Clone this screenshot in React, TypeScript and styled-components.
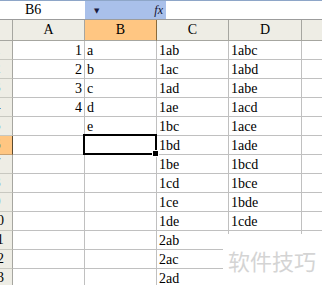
import styled, { createGlobalStyle } from 'styled-components';

const GlobalStyle = createGlobalStyle`
  html, body { margin: 0; padding: 0; background: #fff; }
  * { box-sizing: border-box; }
`;

const rows: string[][] = [
  ['1', 'a', '1ab', '1abc'],
  ['2', 'b', '1ac', '1abd'],
  ['3', 'c', '1ad', '1abe'],
  ['4', 'd', '1ae', '1acd'],
  ['', 'e', '1bc', '1ace'],
  ['', '', '1bd', '1ade'],
  ['', '', '1be', '1bcd'],
  ['', '', '1cd', '1bce'],
  ['', '', '1ce', '1bde'],
  ['', '', '1de', '1cde'],
  ['', '', '2ab', ''],
  ['', '', '2ac', ''],
  ['', '', '2ad', ''],
];

const columns = ['A', 'B', 'C', 'D', ''];
const SELECTED_ROW = 6;
const SELECTED_COL = 1;

const App = () => {
  return (
    <Screen>
      <GlobalStyle />
      <FormulaBar>
        <NameBox>B6</NameBox>
        <BlueStrip>
          <Arrow>▼</Arrow>
          <Fx>fx</Fx>
        </BlueStrip>
        <FormulaInput />
      </FormulaBar>

      <Sheet>
        <Corner />
        {columns.map((c, i) => (
          <ColHeader key={'h' + i} $active={i === SELECTED_COL}>{c}</ColHeader>
        ))}

        {rows.map((r, ri) => (
          <Row key={ri} r={r} n={ri + 1} />
        ))}
      </Sheet>

      <Watermark>软件技巧</Watermark>
    </Screen>
  );
};

const Row = ({ r, n }: { r: string[]; n: number }) => (
  <>
    <RowHeader $active={n === SELECTED_ROW}>
      <RowNum>{n}</RowNum>
    </RowHeader>
    {r.map((v, ci) => (
      <Cell key={ci} $right={ci === 0} $selected={n === SELECTED_ROW && ci === SELECTED_COL}>
        {v}
      </Cell>
    ))}
    <Cell />
  </>
);

// --- styles ---

const Screen = styled.div`
  position: relative;
  width: 322px;
  height: 285px;
  overflow: hidden;
  background: #fff;
  font-family: 'Liberation Serif', 'DejaVu Serif', serif;
  font-size: 14px;
  color: #000;
`;

const FormulaBar = styled.div`
  display: flex;
  height: 20px;
  border-top: 1px solid #8ea6c8;
  border-bottom: 1px solid #9c9c9c;
`;

const NameBox = styled.div`
  width: 85px;
  padding-left: 25px;
  display: flex;
  align-items: center;
  background: #fff;
`;

const BlueStrip = styled.div`
  width: 81px;
  display: flex;
  align-items: center;
  justify-content: space-between;
  padding: 0 3px 0 9px;
  background: #a9c0ea;
`;

const Arrow = styled.span`
  font-family: 'DejaVu Sans', sans-serif;
  font-size: 7px;
  color: #1a1a40;
  margin-top: 2px;
`;

const Fx = styled.span`
  font-style: italic;
  font-size: 12px;
  color: #101030;
`;

const FormulaInput = styled.div`
  flex: 1;
  background: #fff;
`;

const Sheet = styled.div`
  display: grid;
  grid-template-columns: 13px 72px 72px 72px 73px 40px;
  grid-template-rows: 21px;
  grid-auto-rows: 19px;
`;

const Corner = styled.div`
  background: #eeede5;
  border-right: 1px solid #a6a6a0;
  border-bottom: 1px solid #a6a6a0;
`;

const ColHeader = styled.div<{ $active?: boolean }>`
  display: flex;
  align-items: center;
  justify-content: center;
  background: ${(p) => (p.$active ? '#ffc682' : '#eeede5')};
  border-right: 1px solid ${(p) => (p.$active ? '#8a6a3a' : '#a6a6a0')};
  border-bottom: 1px solid #a6a6a0;
`;

const RowHeader = styled.div<{ $active?: boolean }>`
  overflow: hidden;
  background: ${(p) => (p.$active ? '#ffc682' : '#eeede5')};
  border-right: 1px solid ${(p) => (p.$active ? '#5a4a30' : '#a6a6a0')};
  border-bottom: 1px solid ${(p) => (p.$active ? '#c8a070' : '#c8c8c0')};
`;

const RowNum = styled.div`
  width: 28px;
  margin-left: -17px;
  height: 100%;
  display: flex;
  align-items: center;
  justify-content: center;
  white-space: nowrap;
`;

const Cell = styled.div<{ $right?: boolean; $selected?: boolean }>`
  position: relative;
  display: flex;
  align-items: center;
  justify-content: ${(p) => (p.$right ? 'flex-end' : 'flex-start')};
  padding: 1px 2px 0 2px;
  border-right: 1px solid #c0c0c0;
  border-bottom: 1px solid #c0c0c0;
  white-space: nowrap;

  ${(p) =>
    p.$selected &&
    `
    &::after {
      content: '';
      position: absolute;
      left: -2px;
      top: -2px;
      right: -1px;
      bottom: -1px;
      border: 2px solid #000;
    }
    &::before {
      content: '';
      position: absolute;
      right: -3px;
      bottom: -3px;
      width: 5px;
      height: 5px;
      background: #000;
      border: 1px solid #fff;
      z-index: 1;
    }
  `}
`;

const Watermark = styled.div`
  position: absolute;
  left: 223px;
  top: 234px;
  right: 0;
  bottom: 0;
  background: #fff;
  padding: 13px 0 0 5px;
  font-family: 'Noto Sans CJK SC', sans-serif;
  font-size: 22px;
  line-height: 26px;
  color: #d4d4d4;
`;

export default App;
